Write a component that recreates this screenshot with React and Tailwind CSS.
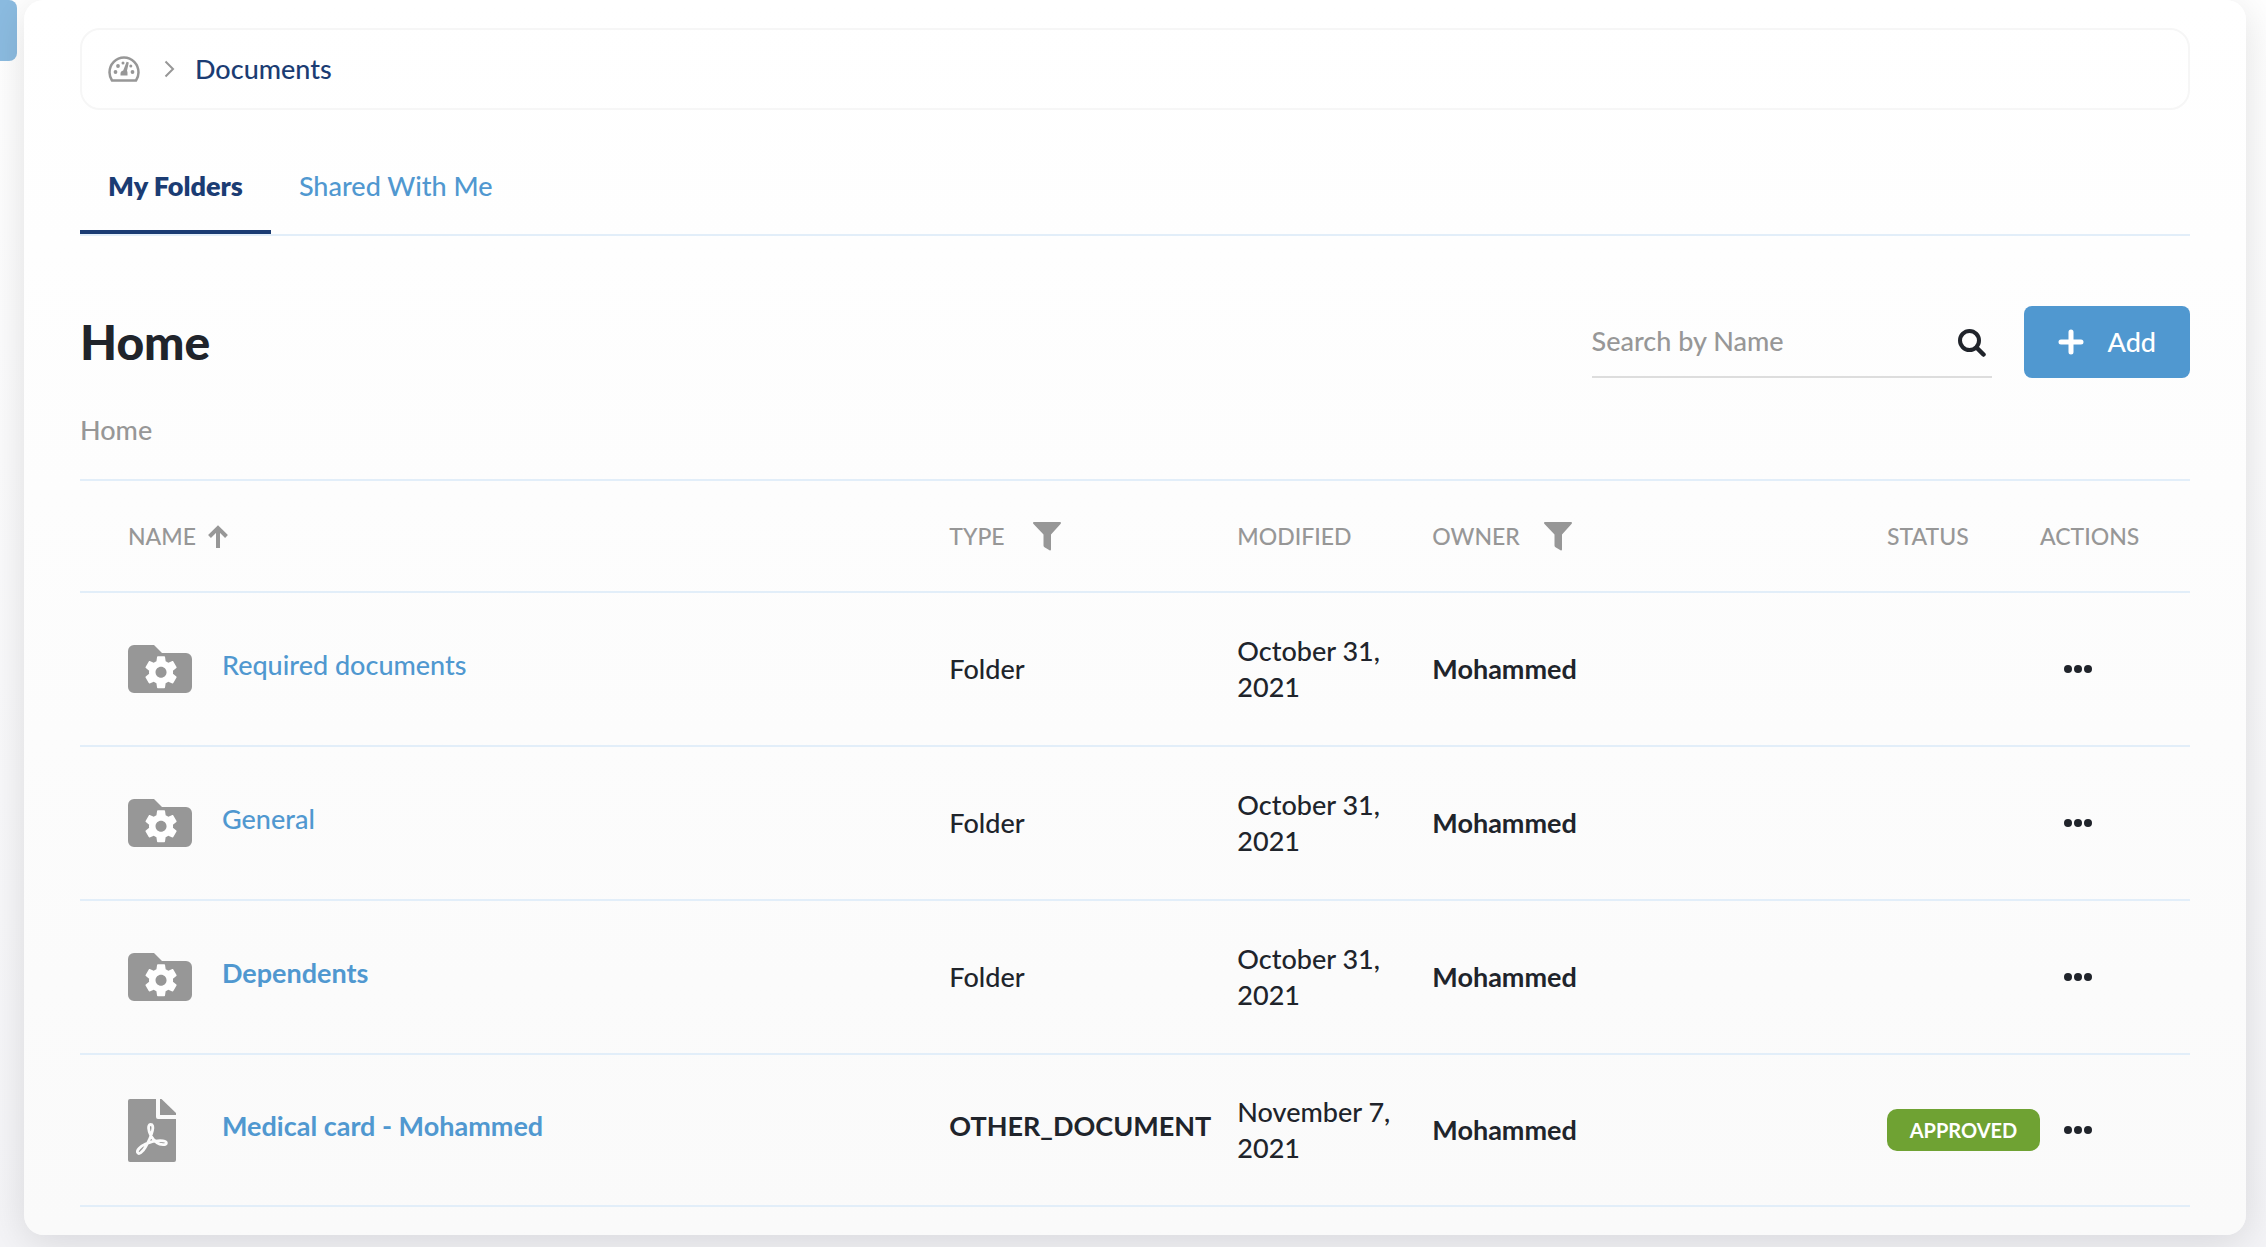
import { useState } from "react";

const ROWS = [
  { id: 1, name: "Required documents", kind: "folder", type: "Folder", modified: "October 31, 2021", owner: "Mohammed" },
  { id: 2, name: "General", kind: "folder", type: "Folder", modified: "October 31, 2021", owner: "Mohammed" },
  { id: 3, name: "Dependents", kind: "folder", type: "Folder", modified: "October 31, 2021", owner: "Mohammed", strong: true },
  {
    id: 4,
    name: "Medical card - Mohammed",
    kind: "pdf",
    type: "OTHER_DOCUMENT",
    modified: "November 7, 2021",
    owner: "Mohammed",
    status: "APPROVED",
    strong: true,
  },
];

const TABS = [
  { id: "mine", label: "My Folders" },
  { id: "shared", label: "Shared With Me" },
];

function GaugeIcon() {
  return (
    <svg width="32" height="26" viewBox="0 0 32 26" fill="none" aria-hidden="true">
      <path
        d="M4 24.5h24c1.600-2.500 2.500-5 2.500-8C30.500 8.200 24 1.500 16 1.500S1.500 8.200 1.500 16.500c0 3 .9 5.500 2.500 8z"
        stroke="#979797"
        strokeWidth="2.500"
        strokeLinejoin="round"
      />
      <g fill="#979797">
        <circle cx="7.500" cy="16" r="1.900" />
        <circle cx="24.500" cy="16" r="1.900" />
        <circle cx="10" cy="10" r="1.900" />
        <circle cx="22.800" cy="10" r="1.500" />
        <circle cx="15" cy="7" r="1.500" />
        <path d="M18.600 5.800l2.200.7-1.800 8.300c.3.500.5 1.200.5 2V19.500h-7v-1.900c0-1.700 1-2.900 2.700-3.200z" />
      </g>
    </svg>
  );
}

function FolderIcon() {
  return (
    <svg width="64" height="48" viewBox="0 0 64 48" aria-hidden="true">
      <path
        d="M6 0h20l8 8h24a6 6 0 0 1 6 6v28a6 6 0 0 1-6 6H6a6 6 0 0 1-6-6V6a6 6 0 0 1 6-6z"
        fill="#979797"
      />
      <g transform="translate(13 7.200) scale(1.670)">
        <path
          d="M19.140 12.940c.04-.3.060-.61.060-.94 0-.32-.02-.64-.07-.94l2.030-1.580c.18-.14.230-.41.120-.61l-1.920-3.320c-.12-.22-.37-.29-.59-.22l-2.390.96c-.5-.38-1.030-.7-1.620-.94l-.36-2.540c-.04-.24-.24-.41-.48-.41h-3.840c-.24 0-.43.170-.47.410l-.36 2.540c-.59.240-1.130.570-1.620.940l-2.390-.96c-.22-.08-.47 0-.59.220L2.740 8.870c-.12.210-.08.470.120.610l2.030 1.580c-.05.3-.09.630-.09.940s.02.640.07.940l-2.030 1.580c-.18.140-.23.410-.12.610l1.920 3.320c.12.220.37.290.59.220l2.390-.96c.5.380 1.030.7 1.620.940l.36 2.540c.05.240.24.410.48.410h3.840c.24 0 .44-.17.470-.41l.36-2.540c.59-.24 1.130-.56 1.620-.94l2.390.96c.22.080.47 0 .59-.22l1.920-3.320c.12-.22.070-.47-.12-.61l-2.010-1.580zM12 15.300c-1.820 0-3.300-1.480-3.300-3.300s1.480-3.300 3.300-3.300 3.300 1.480 3.300 3.300-1.480 3.300-3.300 3.300z"
          fill="#fff"
        />
      </g>
    </svg>
  );
}

function PdfIcon() {
  return (
    <svg width="48" height="63" viewBox="0 0 48 63" aria-hidden="true">
      <path d="M2 0h26v18a2 2 0 0 0 2 2h18v41a2 2 0 0 1-2 2H2a2 2 0 0 1-2-2V2a2 2 0 0 1 2-2z" fill="#979797" />
      <path d="M32 0h1.500L48 14v2H32z" fill="#979797" />
      <path
        d="M22.500 25.500c-2.800 0-2.500 6 .5 11.500 3 5 7 8.500 12 8.700 4.500.2 4.500-3.400 0-3.900-5-.5-12.500 1-17.500 3.200-5 2.300-9 6-8 8.500 1.200 2.600 5-.2 8-5.500 3-5.300 6-12 7-16.500.8-4 .3-6-2-6z"
        fill="none"
        stroke="#fbfbfb"
        strokeWidth="2.800"
        strokeLinejoin="round"
      />
    </svg>
  );
}

function FunnelIcon() {
  return (
    <svg width="28" height="29" viewBox="0 0 28 29" fill="#979797" aria-hidden="true">
      <path d="M1 0h26c1 0 1.300 1 .7 1.800L18 12.500v15c0 .9-.8 1.200-1.500.8l-5-3c-.7-.5-1-1-1-1.800v-11L.3 1.800C-.3 1 0 0 1 0z" />
    </svg>
  );
}

function Dots() {
  return (
    <svg width="28" height="8" viewBox="0 0 28 8" fill="#20242b" aria-hidden="true">
      <circle cx="4" cy="4" r="4" />
      <circle cx="14" cy="4" r="4" />
      <circle cx="24" cy="4" r="4" />
    </svg>
  );
}

export default function App() {
  const [tab, setTab] = useState("mine");
  const [query, setQuery] = useState("");

  const rows = ROWS.filter((r) => r.name.toLowerCase().includes(query.toLowerCase()));

  return (
    <div className="flex min-h-screen overflow-hidden bg-linear-to-b from-white to-[#f4f4f7] pr-5 pb-3 font-['Lato','Liberation_Sans',sans-serif] text-[27px] leading-9 text-[#20242b]">
      {/* Edge of the collapsed side menu */}
      <aside className="w-6 shrink-0">
        <div className="h-[61px] w-[17px] rounded-r-lg bg-[#8bbbe0]" />
      </aside>

      <main className="min-w-0 flex-1 rounded-[20px] bg-linear-to-b from-white to-[#fafafa] px-14 py-7 shadow-[0_8px_40px_rgba(0,0,20,0.12)]">
        {/* Breadcrumb */}
        <nav className="flex h-[82px] items-center rounded-[20px] border-2 border-[#f6f6f6] px-[26px]">
          <a href="#dashboard" aria-label="Dashboard">
            <GaugeIcon />
          </a>
          <svg className="mr-5 ml-6" width="11" height="18" viewBox="0 0 11 18" fill="none" aria-hidden="true">
            <path d="M1.500 1.500L9 9l-7.500 7.500" stroke="#979797" strokeWidth="2" />
          </svg>
          <a href="#documents" className="font-medium text-[#1b3c73]">
            Documents
          </a>
        </nav>

        {/* Tabs */}
        <div role="tablist" className="mt-10 flex h-[86px] border-b-2 border-[#e2eef9]">
          {TABS.map((t) => (
            <button
              key={t.id}
              role="tab"
              aria-selected={tab === t.id}
              onClick={() => setTab(t.id)}
              className={`border-b-4 px-7 pb-2 ${tab === t.id ? "border-[#1b3c73] font-extrabold text-[#1b3c73]" : "border-transparent font-medium text-[#5098d0]"}`}
            >
              {t.label}
            </button>
          ))}
        </div>

        {/* Title and tools */}
        <div className="mt-[70px] flex items-center justify-between">
          <h1 className="text-[48px] font-black">Home</h1>
          <div className="flex h-[72px] items-center gap-8">
            <div className="flex h-[72px] w-[400px] items-center justify-between border-b-2 border-[#dddddd] pr-1.5">
              <input
                type="text"
                aria-label="Search by Name"
                placeholder="Search by Name"
                value={query}
                onChange={(e) => setQuery(e.target.value)}
                className="min-w-0 flex-1 bg-transparent font-medium outline-none placeholder:text-[#979797]"
              />
              <button aria-label="Search" className="pt-1">
                <svg width="28" height="28" viewBox="0 0 28 28" fill="none" stroke="#20242b" strokeLinecap="round" aria-hidden="true">
                  <circle cx="11.500" cy="11.500" r="9.500" strokeWidth="4" />
                  <path d="M19 19l6.500 6.500" strokeWidth="4.500" />
                </svg>
              </button>
            </div>
            <button className="flex h-[72px] items-center gap-6 rounded-lg bg-[#5098d0] px-[34px] font-medium text-white">
              <svg width="26" height="26" viewBox="0 0 26 26" stroke="currentColor" strokeWidth="5" strokeLinecap="round" aria-hidden="true">
                <path d="M13 3v20M3 13h20" />
              </svg>
              Add
            </button>
          </div>
        </div>

        <div className="mt-[34px] font-medium text-[#979797]">Home</div>

        {/* Documents table */}
        <table className="mt-[31px] w-full table-fixed border-t-2 border-[#e2eef9] text-left">
          <colgroup>
            <col className="w-[41.200%]" />
            <col className="w-[288px]" />
            <col className="w-[195px]" />
            <col />
            <col className="w-[153px]" />
            <col className="w-[150px]" />
          </colgroup>
          <thead>
            <tr className="h-28 border-b-2 border-[#e2eef9] text-[23px] text-[#979797]">
              <th className="pl-12 font-medium">
                <button className="flex items-center gap-3">
                  NAME
                  <svg width="20" height="23" viewBox="0 0 20 23" fill="none" stroke="currentColor" strokeWidth="4" aria-hidden="true">
                    <path d="M10 23V3M1.500 11.500L10 3l8.500 8.500" />
                  </svg>
                </button>
              </th>
              <th className="font-medium">
                <div className="flex items-center gap-7">
                  TYPE
                  <button aria-label="Filter by type">
                    <FunnelIcon />
                  </button>
                </div>
              </th>
              <th className="font-medium">MODIFIED</th>
              <th className="font-medium">
                <div className="flex items-center gap-6">
                  OWNER
                  <button aria-label="Filter by owner">
                    <FunnelIcon />
                  </button>
                </div>
              </th>
              <th className="font-medium">STATUS</th>
              <th className="font-medium">ACTIONS</th>
            </tr>
          </thead>
          <tbody>
            {rows.map((row) => (
              <tr key={row.id} className="h-[154px] border-b-2 border-[#e2eef9] last:h-[152px]">
                <td className="pl-12">
                  <div className="flex items-center gap-[30px]">
                    <div className="w-16 shrink-0">{row.kind === "pdf" ? <PdfIcon /> : <FolderIcon />}</div>
                    <a
                      href={`#${row.id}`}
                      className={`pb-2 text-[#5098d0] ${row.strong ? "font-bold" : "font-medium"}`}
                    >
                      {row.name}
                    </a>
                  </div>
                </td>
                <td className={row.kind === "pdf" ? "pb-2 font-bold" : "font-medium"}>{row.type}</td>
                <td className="pr-6 font-medium">{row.modified}</td>
                <td className="font-bold">{row.owner}</td>
                <td>
                  {row.status && (
                    <span className="flex h-[42px] items-center justify-center rounded-[10px] bg-[#6fa233] text-[20px] font-bold text-white">
                      {row.status}
                    </span>
                  )}
                </td>
                <td className="pl-6">
                  <button aria-label={`Actions for ${row.name}`} className="block">
                    <Dots />
                  </button>
                </td>
              </tr>
            ))}
          </tbody>
        </table>
      </main>
    </div>
  );
}
